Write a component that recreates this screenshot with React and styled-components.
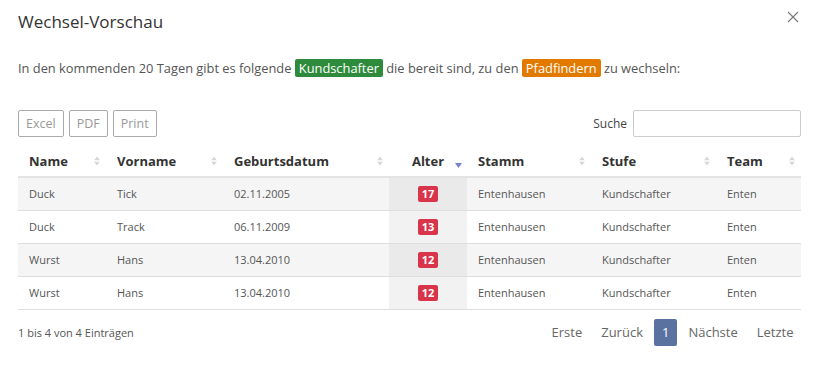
import React from "react";
import styled, { createGlobalStyle } from "styled-components";

const Global = createGlobalStyle`
  html, body { margin: 0; padding: 0; background: #fff; }
  body { font-family: "Open Sans", "Liberation Sans", sans-serif; color: #555; }
  * { box-sizing: border-box; }
`;

const Modal = styled.div`
  width: 820px;
  height: 376px;
  background: #fff;
  padding: 10px 19px 0 18px;
`;

const Header = styled.div`
  display: flex;
  justify-content: space-between;
  align-items: flex-start;
`;

const Title = styled.h4`
  margin: 0;
  font-size: 17px;
  line-height: 24px;
  font-weight: 400;
  color: #333;
`;

const Close = styled.button`
  border: 0;
  background: none;
  padding: 0;
  margin: 1px 2px 0 0;
  width: 12px;
  height: 12px;
  cursor: pointer;
  display: flex;
`;

const Intro = styled.p`
  margin: 24px 0 0;
  font-size: 12.85px;
  line-height: 20px;
  color: #555;
`;

const Label = styled.span`
  display: inline-block;
  padding: 0 4px;
  line-height: 18px;
  border-radius: 2px;
  color: #fff;
  background: ${(p) => p.$color};
`;

const Toolbar = styled.div`
  margin-top: 32px;
  display: flex;
  justify-content: space-between;
  align-items: center;
`;

const Buttons = styled.div`
  display: flex;
  gap: 5px;
`;

const ExportButton = styled.button`
  height: 27px;
  padding: 0 7px;
  border: 1px solid #aaa;
  border-radius: 2px;
  background: #fff;
  color: #999;
  font-family: inherit;
  font-size: 12.5px;
`;

const Search = styled.label`
  display: flex;
  align-items: center;
  gap: 6px;
  font-size: 12px;
  color: #444;
`;

const SearchInput = styled.input`
  width: 168px;
  height: 27px;
  border: 1px solid #ccc;
  border-radius: 2px;
  outline: none;
`;

const Table = styled.table`
  margin-top: 8px;
  width: 783px;
  border-collapse: collapse;
  table-layout: fixed;
`;

const Th = styled.th`
  position: relative;
  height: 32px;
  padding: 0 11px;
  text-align: ${(p) => (p.$center ? "center" : "left")};
  font-size: 13px;
  font-weight: 700;
  color: #333;
  border-bottom: 2px solid #e4e4e4;
`;

const SortIcon = styled.span`
  position: absolute;
  right: 6px;
  top: 50%;
  transform: translateY(-50%);
  display: flex;
  flex-direction: column;
  gap: 1px;
`;

const ActiveSort = styled.span`
  position: absolute;
  right: 5px;
  top: 18px;
  display: flex;
`;

const Row = styled.tr`
  background: ${(p) => (p.$striped ? "#f5f5f5" : "#fff")};
  border-top: 1px solid #dedede;
  &:last-child { border-bottom: 1px solid #dedede; }
`;

const Td = styled.td`
  height: 33px;
  padding: 0 11px;
  font-size: 11px;
  color: #555;
  text-align: ${(p) => (p.$center ? "center" : "left")};
  background: ${(p) => (p.$sorted ? (p.$striped ? "#eaeaea" : "#f2f2f2") : "transparent")};
`;

const Badge = styled.span`
  display: inline-block;
  min-width: 20px;
  padding: 0 3px;
  line-height: 16px;
  border-radius: 2px;
  background: #d8344a;
  color: #fff;
  font-weight: 700;
  font-size: 11px;
  text-align: center;
  vertical-align: middle;
`;

const Footer = styled.div`
  margin-top: 9px;
  display: flex;
  justify-content: space-between;
  align-items: center;
`;

const Info = styled.div`
  font-size: 11px;
  color: #555;
`;

const Pager = styled.div`
  display: flex;
  align-items: center;
  margin-right: -2px;
`;

const PageLink = styled.a`
  display: block;
  font-size: 13px;
  line-height: 27px;
  padding: 0 ${(p) => (p.$active ? "8px" : "9.5px")};
  margin: 0 ${(p) => (p.$active ? "1.5px" : "0")};
  border-radius: 2px;
  color: ${(p) => (p.$active ? "#fff" : "#666")};
  background: ${(p) => (p.$active ? "#5a72a0" : "transparent")};
  cursor: pointer;
`;

const cols = [
  { key: "name", label: "Name", w: 88 },
  { key: "vorname", label: "Vorname", w: 117 },
  { key: "geb", label: "Geburtsdatum", w: 166 },
  { key: "alter", label: "Alter", w: 78, center: true, sorted: true },
  { key: "stamm", label: "Stamm", w: 124 },
  { key: "stufe", label: "Stufe", w: 125 },
  { key: "team", label: "Team", w: 85 },
];

const rows = [
  { name: "Duck", vorname: "Tick", geb: "02.11.2005", alter: 17 },
  { name: "Duck", vorname: "Track", geb: "06.11.2009", alter: 13 },
  { name: "Wurst", vorname: "Hans", geb: "13.04.2010", alter: 12 },
  { name: "Wurst", vorname: "Hans", geb: "13.04.2010", alter: 12 },
];

const Both = () => (
  <SortIcon>
    <svg width="6" height="4" viewBox="0 0 6 4"><path d="M3 0L6 4H0z" fill="#d6d6d6" /></svg>
    <svg width="6" height="4" viewBox="0 0 6 4"><path d="M0 0H6L3 4z" fill="#d6d6d6" /></svg>
  </SortIcon>
);

export default function App() {
  return (
    <>
      <Global />
      <Modal>
        <Header>
          <Title>Wechsel-Vorschau</Title>
          <Close aria-label="Schließen">
            <svg width="12" height="12" viewBox="0 0 12 12">
              <path d="M1 1L11 11M11 1L1 11" stroke="#777" strokeWidth="1.1" />
            </svg>
          </Close>
        </Header>
        <Intro>
          In den kommenden 20 Tagen gibt es folgende <Label $color="#2e8b3b">Kundschafter</Label> die bereit sind, zu den{" "}
          <Label $color="#e27a00">Pfadfindern</Label> zu wechseln:
        </Intro>
        <Toolbar>
          <Buttons>
            <ExportButton>Excel</ExportButton>
            <ExportButton>PDF</ExportButton>
            <ExportButton>Print</ExportButton>
          </Buttons>
          <Search>
            Suche
            <SearchInput />
          </Search>
        </Toolbar>
        <Table>
          <colgroup>
            {cols.map((c) => (
              <col key={c.key} style={{ width: c.w }} />
            ))}
          </colgroup>
          <thead>
            <tr>
              {cols.map((c) => (
                <Th key={c.key} $center={c.center}>
                  {c.label}
                  {c.sorted ? (
                    <ActiveSort>
                      <svg width="7" height="5" viewBox="0 0 7 5"><path d="M0 0H7L3.5 5z" fill="#7b80d6" /></svg>
                    </ActiveSort>
                  ) : (
                    <Both />
                  )}
                </Th>
              ))}
            </tr>
          </thead>
          <tbody>
            {rows.map((r, i) => (
              <Row key={i} $striped={i % 2 === 0}>
                <Td>{r.name}</Td>
                <Td>{r.vorname}</Td>
                <Td>{r.geb}</Td>
                <Td $center $sorted $striped={i % 2 === 0}>
                  <Badge>{r.alter}</Badge>
                </Td>
                <Td>Entenhausen</Td>
                <Td>Kundschafter</Td>
                <Td>Enten</Td>
              </Row>
            ))}
          </tbody>
        </Table>
        <Footer>
          <Info>1 bis 4 von 4 Einträgen</Info>
          <Pager>
            <PageLink>Erste</PageLink>
            <PageLink>Zurück</PageLink>
            <PageLink $active>1</PageLink>
            <PageLink>Nächste</PageLink>
            <PageLink>Letzte</PageLink>
          </Pager>
        </Footer>
      </Modal>
    </>
  );
}
